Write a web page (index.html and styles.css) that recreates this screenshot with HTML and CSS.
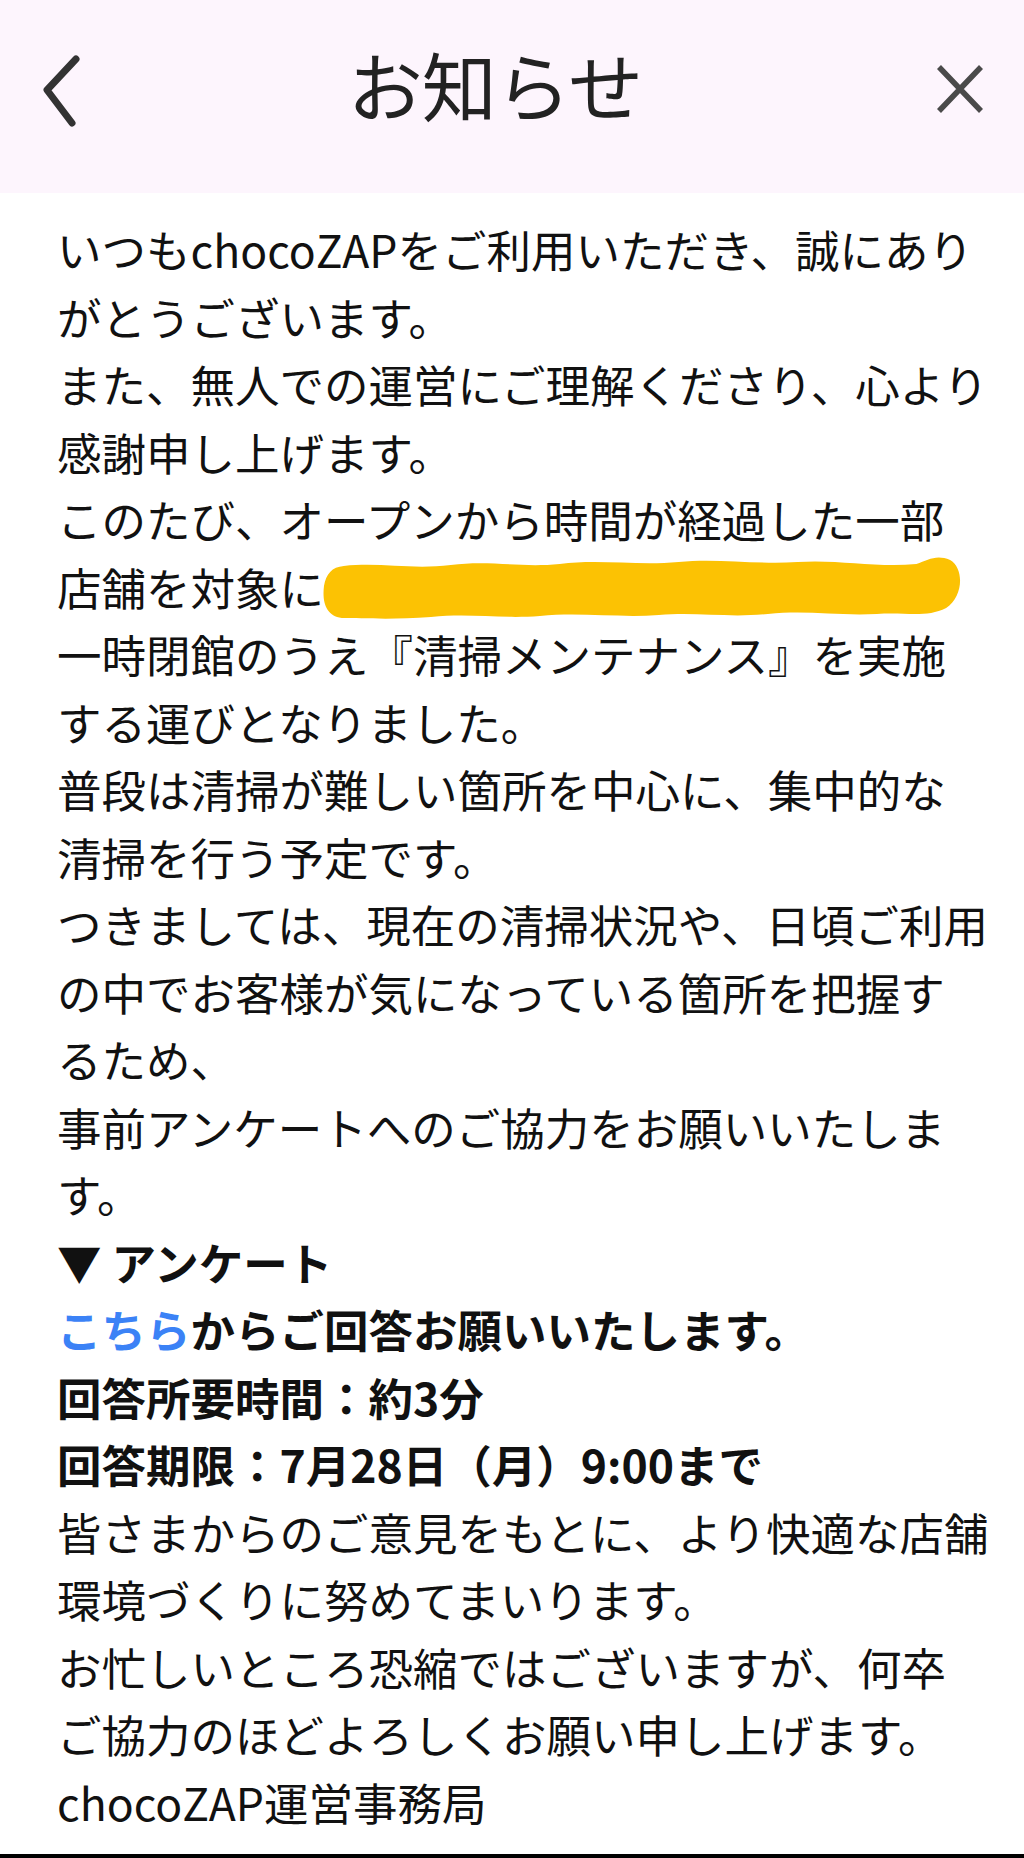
FILE: index.html
```html
<!DOCTYPE html>
<html lang="ja">
  <head>
    <meta charset="UTF-8" />
    <meta name="viewport" content="width=device-width, initial-scale=1.0" />
    <title>お知らせ</title>
    <link rel="stylesheet" href="styles.css">
  </head>
  <body>
    <header class="top-bar">
      <button class="icon-btn back" aria-label="戻る">
        <svg width="48" height="76" viewBox="0 0 48 76">
          <path d="M38 6 L9 37 L34 70" fill="none" stroke="#333" stroke-width="7" stroke-linecap="round" stroke-linejoin="round" />
        </svg>
      </button>
      <h1 class="title">お知らせ</h1>
      <button class="icon-btn close" aria-label="閉じる">
        <svg width="52" height="52" viewBox="0 0 52 52">
          <path d="M5 4 L47 48 M47 4 L5 48" fill="none" stroke="#4a4a4a" stroke-width="5.5" stroke-linecap="butt" />
        </svg>
      </button>
    </header>

    <main class="notice">
      <p>いつもchocoZAPをご利用いただき、誠にありがとうございます。</p>
      <p>また、無人での運営にご理解くださり、心より感謝申し上げます。</p>
      <p>このたび、オープンから時間が経過した一部<br>店舗を対象に<span class="blot"><svg width="640" height="64" viewBox="0 0 646 64" preserveAspectRatio="none"><path d="M22 10 C60 6 90 14 130 9 C170 4 200 12 240 8 C280 3 320 10 360 6 C400 2 440 9 480 6 C520 3 560 12 600 8 C612 4 620 -2 634 4 C648 12 648 40 630 52 C610 62 590 56 560 58 C520 60 490 54 450 58 C410 62 380 56 340 59 C300 62 260 56 220 60 C180 63 150 57 110 61 C70 64 40 62 20 62 C4 60 0 46 2 30 C4 18 10 11 22 10 Z" fill="#fcc203" /></svg></span><br>一時閉館のうえ『清掃メンテナンス』を実施<br>する運びとなりました。</p>
      <p>普段は清掃が難しい箇所を中心に、集中的な<br>清掃を行う予定です。</p>
      <p>つきましては、現在の清掃状況や、日頃ご利用<br>の中でお客様が気になっている箇所を把握す<br>るため、</p>
      <p>事前アンケートへのご協力をお願いいたしま<br>す。</p>
      <p class="strong">▼ アンケート</p>
      <p class="strong"><a class="link" href="#">こちら</a>からご回答お願いいたします。</p>
      <p class="strong">回答所要時間：約3分</p>
      <p class="strong">回答期限：7月28日（月）9:00まで</p>
      <p>皆さまからのご意見をもとに、より快適な店舗環境づくりに努めてまいります。</p>
      <p>お忙しいところ恐縮ではございますが、何卒<br>ご協力のほどよろしくお願い申し上げます。</p>
      <p>chocoZAP運営事務局</p>
    </main>
    <div class="bottom-line"></div>
  </body>
</html>
```

FILE: styles.css
```css
/* Reset */
body {
  margin: 0;
  background: #fff;
  font-family: "Noto Sans CJK JP", "Noto Sans", sans-serif;
  color: #111;
  width: 1024px;
  height: 1858px;
  display: flex;
  flex-direction: column;
  overflow: hidden;
}

/* Header */
.top-bar {
  height: 193px;
  background: #fdf5fd;
  display: flex;
  align-items: flex-start;
  justify-content: space-between;
  padding: 0 38px 0 38px;
  box-sizing: border-box;
}

.title {
  margin: 0 30px 0 0;
  padding-top: 36px;
  font-size: 75px;
  font-weight: 400;
  line-height: 96px;
  color: #222;
  letter-spacing: -1px;
}

.icon-btn {
  background: none;
  border: none;
  padding: 0;
  cursor: pointer;
}

.icon-btn.back {
  margin-top: 53px;
}

.icon-btn.close {
  margin-top: 63px;
}

/* Body text */
.notice {
  flex: 1;
  padding: 22px 0 0 57px;
  width: 940px;
  font-size: 44.5px;
  line-height: 67.5px;
}

.notice p {
  margin: 0;
}

.notice .strong {
  font-weight: 700;
}

.link {
  color: #3b82f6;
  text-decoration: none;
}

.blot {
  display: inline-block;
  vertical-align: middle;
  margin-left: -2px;
  height: 64px;
  margin-top: -10px;
}

.blot svg {
  display: block;
}

.bottom-line {
  height: 4px;
  background: #000;
}
```
